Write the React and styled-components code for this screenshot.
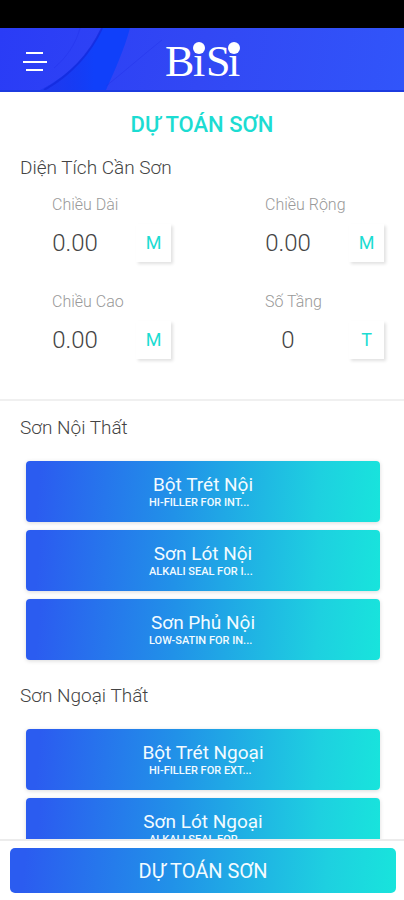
import React, { useState } from "react";
import styled, { createGlobalStyle } from "styled-components";

const GlobalStyle = createGlobalStyle`
    * {
        box-sizing: border-box;
    }
    body {
        margin: 0;
        background: #fff;
        font-family: Roboto, "Noto Sans", sans-serif;
    }
    button, input {
        font-family: inherit;
    }
`;

const gradient = "linear-gradient(95deg, #2b5cf0 4%, #2191e8 42%, #1ed0e0 82%, #18e4dc 100%)";

const Screen = styled.div`
    display: flex;
    flex-direction: column;
    height: 100vh;
`;

const StatusBar = styled.div`
    flex: none;
    height: 28px;
    background: #000;
`;

const Header = styled.header`
    flex: none;
    display: grid;
    grid-template-columns: 1fr auto 1fr;
    align-items: center;
    height: 64px;
    padding-top: 4px;
    position: relative;
    background: linear-gradient(100deg, #2a3cf6, #3248f4 50%, #3155fa);
    border-bottom: 2px solid #1c3be0;
`;

const Waves = styled.svg`
    position: absolute;
    top: 0;
    left: 0;
`;

const MenuButton = styled.button`
    position: relative;
    justify-self: start;
    display: flex;
    margin-left: 14px;
    padding: 8px;
    border: 0;
    background: none;
    cursor: pointer;
`;

const Logo = styled.svg`
    position: relative;
    display: block;
`;

const Content = styled.main`
    flex: 1;
    min-height: 0;
    overflow-y: auto;
    scrollbar-width: none;
`;

const Title = styled.h1`
    margin: 21px 0 0;
    color: #1cdcd2;
    font-size: 22px;
    font-weight: 500;
    line-height: 24px;
    text-align: center;
`;

const SectionTitle = styled.h2`
    margin: 0;
    padding-left: 20px;
    color: #444;
    font-size: 19px;
    font-weight: 300;
    line-height: 24px;
`;

const AreaSection = styled.section`
    padding: 19px 0 32px;
    border-bottom: 2px solid #f0f0f0;
`;

const Fields = styled.div`
    display: grid;
    grid-template-columns: 1fr 1fr;
    gap: 22px 94px;
    padding: 15px 20px 0 52px;
`;

const Label = styled.label`
    display: block;
    color: #999;
    font-size: 16px;
    font-weight: 300;
    line-height: 20px;
    white-space: nowrap;
`;

const InputRow = styled.div`
    display: flex;
    align-items: center;
    justify-content: space-between;
    height: 38px;
    margin: 9px 0 8px;
`;

const NumberInput = styled.input`
    width: 46px;
    padding: 0;
    border: 0;
    outline: none;
    background: none;
    color: #444;
    font-size: 24px;
    font-weight: 300;
    text-align: center;
`;

const Unit = styled.span`
    width: 35px;
    height: 38px;
    color: #1cdcd2;
    font-size: 18px;
    line-height: 38px;
    text-align: center;
    background: #fff;
    box-shadow: 2px 2px 3px rgba(0, 0, 0, 0.12);
`;

const PaintSection = styled.section`
    padding-top: 15px;
`;

const PaintList = styled.div`
    display: flex;
    flex-direction: column;
    gap: 8px;
    padding: 21px 24px 9px 26px;
`;

const PaintButton = styled.button`
    display: flex;
    flex-direction: column;
    align-items: center;
    justify-content: center;
    height: 61px;
    padding: 0;
    border: 0;
    border-radius: 4px;
    color: #f2fbff;
    background: ${gradient};
    box-shadow: 0 1px 4px rgba(0, 0, 0, 0.15);
    cursor: pointer;
`;

const PaintName = styled.span`
    font-size: 19px;
    line-height: 22px;
`;

const PaintCode = styled.span`
    width: 108px;
    font-size: 11px;
    font-weight: 500;
    line-height: 14px;
    text-align: left;
    white-space: nowrap;
`;

const Footer = styled.footer`
    flex: none;
    padding: 7px 8px 7px 10px;
    border-top: 2px solid #ececec;
    background: #fff;
`;

const SubmitButton = styled.button`
    display: block;
    width: 100%;
    height: 45px;
    border: 0;
    border-radius: 5px;
    color: #f2fbff;
    background: ${gradient};
    font-size: 20px;
    cursor: pointer;
`;

const fields = [
    { id: "length", label: "Chiều Dài", value: "0.00", unit: "M" },
    { id: "width", label: "Chiều Rộng", value: "0.00", unit: "M" },
    { id: "height", label: "Chiều Cao", value: "0.00", unit: "M" },
    { id: "floors", label: "Số Tầng", value: "0", unit: "T" },
];

const sections = [
    {
        title: "Sơn Nội Thất",
        paints: [
            { name: "Bột Trét Nội", code: "HI-FILLER FOR INT..." },
            { name: "Sơn Lót Nội", code: "ALKALI SEAL FOR I..." },
            { name: "Sơn Phủ Nội", code: "LOW-SATIN FOR IN..." },
        ],
    },
    {
        title: "Sơn Ngoại Thất",
        paints: [
            { name: "Bột Trét Ngoại", code: "HI-FILLER FOR EXT..." },
            { name: "Sơn Lót Ngoại", code: "ALKALI SEAL FOR ..." },
        ],
    },
];

function AppHeader() {
    return (
        <Header>
            <Waves width="180" height="62" viewBox="0 0 180 62" aria-hidden="true">
                <defs>
                    <linearGradient id="wave" x1="0" y1="0" x2="1" y2="0">
                        <stop offset="0" stopColor="#1030e8" stopOpacity="0.4" />
                        <stop offset="0.6" stopColor="#1040fa" />
                    </linearGradient>
                </defs>
                <path d="M40 62C68 48 90 26 102 0H130C124 22 115 42 106 62Z" fill="url(#wave)" />
                <path d="M44 62C72 46 90 26 102 0" fill="none" stroke="#1228dc" strokeWidth="2" opacity="0.7" />
                <path d="M54 40C66 30 76 16 80 0M106 58C124 44 144 26 162 12" fill="none" stroke="#2030e8" opacity="0.4" />
            </Waves>
            <MenuButton aria-label="Menu">
                <svg width="26" height="22" viewBox="0 0 26 22" stroke="#fff" strokeWidth="2">
                    <path d="M4 3H21M1 12H25M4 20H21" />
                </svg>
            </MenuButton>
            <Logo width="76" height="56" viewBox="0 0 76 56" fill="#fff" role="img" aria-label="BiSi">
                <text x="1 29 42 64" y="43" fontFamily="Liberation Serif, serif" fontSize="44">BiSi</text>
                <circle cx="35" cy="15" r="6" />
                <circle cx="70" cy="15" r="6" />
            </Logo>
        </Header>
    );
}

function Field({ field }) {
    const [value, setValue] = useState(field.value);

    return (
        <div>
            <Label htmlFor={field.id}>{field.label}</Label>
            <InputRow>
                <NumberInput
                    id={field.id}
                    inputMode="decimal"
                    value={value}
                    onChange={(e) => setValue(e.target.value)}
                />
                <Unit>{field.unit}</Unit>
            </InputRow>
        </div>
    );
}

export default function App() {
    return (
        <Screen>
            <GlobalStyle />
            <StatusBar />
            <AppHeader />
            <Content>
                <Title>DỰ TOÁN SƠN</Title>
                <AreaSection>
                    <SectionTitle>Diện Tích Cần Sơn</SectionTitle>
                    <Fields>
                        {fields.map((field) => (
                            <Field key={field.id} field={field} />
                        ))}
                    </Fields>
                </AreaSection>
                {sections.map((section) => (
                    <PaintSection key={section.title}>
                        <SectionTitle>{section.title}</SectionTitle>
                        <PaintList>
                            {section.paints.map((paint) => (
                                <PaintButton key={paint.name}>
                                    <PaintName>{paint.name}</PaintName>
                                    <PaintCode>{paint.code}</PaintCode>
                                </PaintButton>
                            ))}
                        </PaintList>
                    </PaintSection>
                ))}
            </Content>
            <Footer>
                <SubmitButton>DỰ TOÁN SƠN</SubmitButton>
            </Footer>
        </Screen>
    );
}
